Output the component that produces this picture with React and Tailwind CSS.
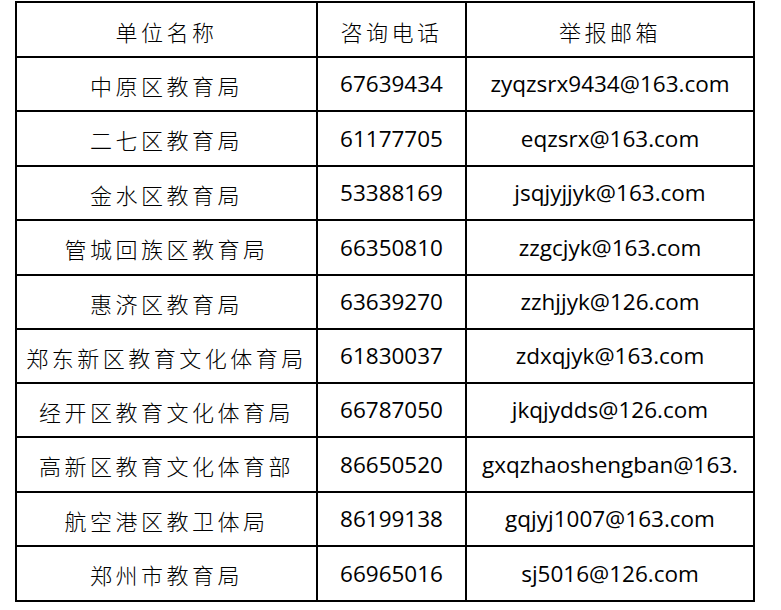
import React from 'react';

const rows = [
  ['中原区教育局', '67639434', 'zyqzsrx9434@163.com'],
  ['二七区教育局', '61177705', 'eqzsrx@163.com'],
  ['金水区教育局', '53388169', 'jsqjyjjyk@163.com'],
  ['管城回族区教育局', '66350810', 'zzgcjyk@163.com'],
  ['惠济区教育局', '63639270', 'zzhjjyk@126.com'],
  ['郑东新区教育文化体育局', '61830037', 'zdxqjyk@163.com'],
  ['经开区教育文化体育局', '66787050', 'jkqjydds@126.com'],
  ['高新区教育文化体育部', '86650520', 'gxqzhaoshengban@163.'],
  ['航空港区教卫体局', '86199138', 'gqjyj1007@163.com'],
  ['郑州市教育局', '66965016', 'sj5016@126.com'],
];

const heights = ['h-[54px]', 'h-[55px]', 'h-[54px]', 'h-[55px]', 'h-[54px]', 'h-[54px]', 'h-[54px]', 'h-[55px]', 'h-[54px]', 'h-[55px]'];

const cjk = "font-['Noto_Sans_CJK_SC',sans-serif] font-extralight text-[22px] tracking-[3.5px]";
const latin = "font-['Open_Sans',sans-serif] text-[22.5px]";

const App = () => {
  return (
    <div className="w-[781px] h-[610px] bg-white text-black">
      <div className="ml-[15px] pt-[1px]">
        <div className="grid grid-cols-[301px_149px_288px] border-l-2 border-t-2 border-black w-[740px]">
          <div className={`h-[55px] flex items-center justify-center border-r-2 border-b-2 border-black pt-1 ${cjk}`}>单位名称</div>
          <div className={`h-[55px] flex items-center justify-center border-r-2 border-b-2 border-black pt-1 ${cjk}`}>咨询电话</div>
          <div className={`h-[55px] flex items-center justify-center border-r-2 border-b-2 border-black pt-1 ${cjk}`}>举报邮箱</div>
          {rows.map((r, i) => (
            <React.Fragment key={r[0]}>
              <div className={`${heights[i]} flex items-center justify-center border-r-2 border-b-2 border-black pt-0.5 whitespace-nowrap ${cjk}`}>{r[0]}</div>
              <div className={`${heights[i]} flex items-center justify-center border-r-2 border-b-2 border-black ${latin}`}>{r[1]}</div>
              <div className={`${heights[i]} flex items-center justify-center border-r-2 border-b-2 border-black whitespace-nowrap overflow-hidden ${latin}`}>{r[2]}</div>
            </React.Fragment>
          ))}
        </div>
      </div>
    </div>
  );
};

export default App;
